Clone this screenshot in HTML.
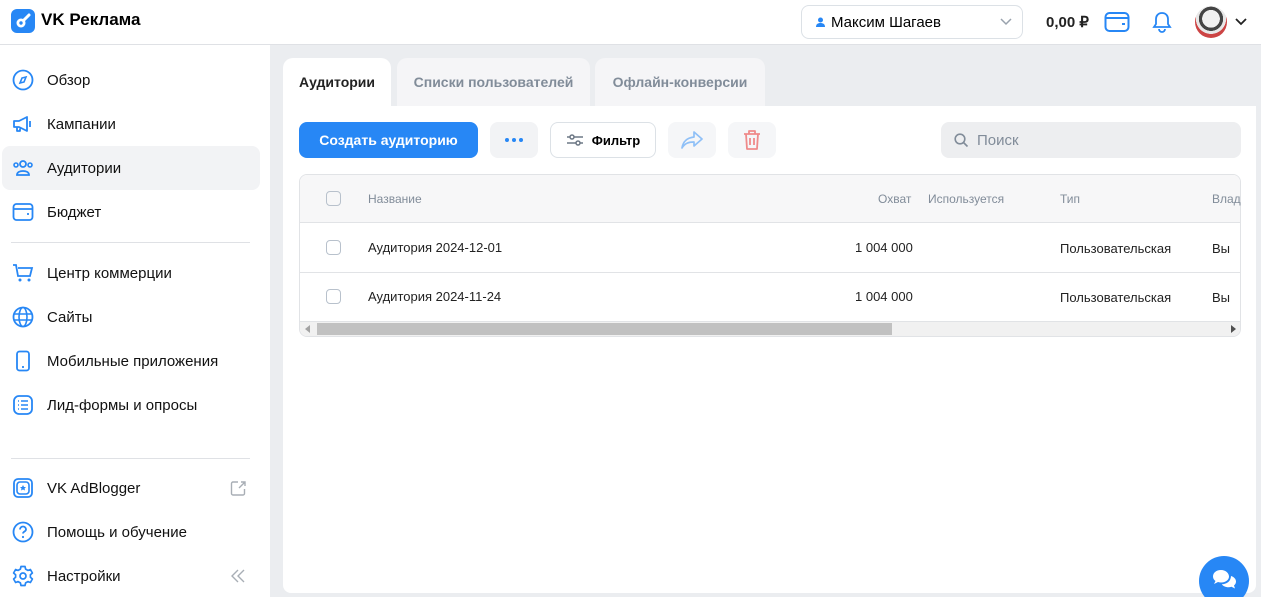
<!DOCTYPE html>
<html style="overflow:hidden"><head><meta charset="utf-8"><style>
*{box-sizing:border-box;margin:0;padding:0}
html,body{width:1261px;height:597px;overflow:hidden}
body{font-family:"Liberation Sans",sans-serif;background:#fff;color:#000;position:relative}
.top{position:absolute;left:0;top:0;width:1261px;height:45px;border-bottom:1px solid #dfe1e5;background:#fff}
.side{position:absolute;left:0;top:45px;width:270px;height:552px;background:#fff}
.main{position:absolute;left:270px;top:45px;width:991px;height:552px;background:#ebedf0}
.nav{position:absolute;left:0;width:260px;height:44px;display:flex;align-items:center;font-size:15px;color:#111}
.nav svg{position:absolute;left:12px}
.nav span{position:absolute;left:47px}
.sep{position:absolute;left:11px;width:239px;height:1px;background:#dfe1e5}
.tab{position:absolute;top:58px;height:48px;border-radius:10px 10px 0 0;font-size:14px;font-weight:bold;display:flex;align-items:center;justify-content:center;color:#818c99;background:#f5f5f7}
.card{position:absolute;left:283px;top:106px;width:973px;height:487px;background:#fff;border-radius:0 0 8px 8px}
.btn{position:absolute;top:122px;height:36px;border-radius:8px;display:flex;align-items:center;justify-content:center;font-size:14px}
.t{position:absolute;font-size:13px;color:#222}
.cb{position:absolute;left:326px;width:15px;height:15px;border:1.5px solid #b8c1cc;border-radius:4px}
</style></head><body>
<div class="top">
 <svg style="position:absolute;left:11px;top:9px" width="24" height="24" viewBox="0 0 24 24"><rect width="24" height="24" rx="6" fill="#2787f5"/><circle cx="10" cy="14" r="4.5" fill="#fff"/><path d="M12 12l6-6" stroke="#fff" stroke-width="3" stroke-linecap="round"/><circle cx="10" cy="14" r="1.7" fill="#2787f5"/></svg>
 <div style="position:absolute;left:41px;top:10px;font-size:17px;font-weight:bold">VK Реклама</div>
 <div style="position:absolute;left:801px;top:5px;width:222px;height:34px;border:1px solid #dce1e6;border-radius:8px">
  <svg style="position:absolute;left:14px;top:11px" width="9" height="10" viewBox="0 0 9 10"><circle cx="4.5" cy="3" r="2.5" fill="#2787f5"/><path d="M0 10c0-3 2-4 4.5-4s4.5 1 4.5 4z" fill="#2787f5"/></svg>
  <div style="position:absolute;left:29px;top:8px;font-size:15px">Максим Шагаев</div>
  <svg style="position:absolute;left:198px;top:12px" width="12" height="8"><path d="M1 1l5 5 5-5" stroke="#99a2ad" stroke-width="1.5" fill="none"/></svg>
 </div>
 <div style="position:absolute;left:1046px;top:13px;font-size:15px;font-weight:bold;color:#222">0,00 ₽</div>
 <svg style="position:absolute;left:1104px;top:11px" width="26" height="22" viewBox="0 0 26 22"><rect x="1.5" y="2" width="23" height="18" rx="4" fill="none" stroke="#2787f5" stroke-width="2"/><path d="M1.5 7h23" stroke="#2787f5" stroke-width="2"/><path d="M18 13h3" stroke="#2787f5" stroke-width="2"/></svg>
 <svg style="position:absolute;left:1152px;top:11px" width="20" height="22" viewBox="0 0 20 22"><path d="M10 2c-4 0-6 3-6 6v5l-2 3h16l-2-3V8c0-3-2-6-6-6zM7 18a3 3 0 006 0" fill="none" stroke="#2787f5" stroke-width="1.8"/></svg>
 <div style="position:absolute;left:1195px;top:6px;width:32px;height:32px;border-radius:50%;background:radial-gradient(circle at 50% 40%,#f0f0f0 0 35%,#444 36% 48%,#e8e8e8 49% 60%,#c44 61%)"></div>
 <svg style="position:absolute;left:1235px;top:18px" width="12" height="8"><path d="M1 1l5 5 5-5" stroke="#222" stroke-width="1.8" fill="none"/></svg>
</div>
<div class="side">
 <div class="nav" style="top:13px"><svg width="22" height="22" viewBox="0 0 22 22"><circle cx="11" cy="11" r="9.5" fill="none" stroke="#2787f5" stroke-width="1.8"/><path d="M14 8l-2 5-4 1 2-5z" fill="none" stroke="#2787f5" stroke-width="1.6"/></svg><span>Обзор</span></div>
 <div class="nav" style="top:57px"><svg width="22" height="22" viewBox="0 0 22 22"><path d="M2 8h5l8-4v14l-8-4H2zM5 14v4h3v-4M18 8v6" fill="none" stroke="#2787f5" stroke-width="1.8" stroke-linejoin="round"/></svg><span>Кампании</span></div>
 <div class="nav" style="top:101px;background:#f2f3f5;border-radius:8px;left:2px;width:258px"><svg style="left:10px" width="22" height="22" viewBox="0 0 22 22"><circle cx="11" cy="7" r="3" fill="none" stroke="#2787f5" stroke-width="1.8"/><path d="M5 18c0-3 3-4 6-4s6 1 6 4z" fill="none" stroke="#2787f5" stroke-width="1.8"/><circle cx="4" cy="8" r="2" fill="none" stroke="#2787f5" stroke-width="1.6"/><circle cx="18" cy="8" r="2" fill="none" stroke="#2787f5" stroke-width="1.6"/></svg><span style="left:45px">Аудитории</span></div>
 <div class="nav" style="top:145px"><svg width="22" height="22" viewBox="0 0 22 22"><rect x="1.5" y="3" width="19" height="16" rx="3" fill="none" stroke="#2787f5" stroke-width="1.8"/><path d="M1.5 8h19M15 13h2" stroke="#2787f5" stroke-width="1.8"/></svg><span>Бюджет</span></div>
 <div class="sep" style="top:197px"></div>
 <div class="nav" style="top:206px"><svg width="22" height="22" viewBox="0 0 22 22"><path d="M1 3h3l2 11h12l2-8H6" fill="none" stroke="#2787f5" stroke-width="1.8"/><circle cx="8" cy="18" r="1.5" fill="#2787f5"/><circle cx="17" cy="18" r="1.5" fill="#2787f5"/></svg><span>Центр коммерции</span></div>
 <div class="nav" style="top:250px"><svg width="22" height="22" viewBox="0 0 22 22"><circle cx="11" cy="11" r="9.5" fill="none" stroke="#2787f5" stroke-width="1.8"/><ellipse cx="11" cy="11" rx="4" ry="9.5" fill="none" stroke="#2787f5" stroke-width="1.6"/><path d="M2 8h18M2 14h18" stroke="#2787f5" stroke-width="1.6"/></svg><span>Сайты</span></div>
 <div class="nav" style="top:294px"><svg width="22" height="22" viewBox="0 0 22 22"><rect x="5" y="1.5" width="12" height="19" rx="2.5" fill="none" stroke="#2787f5" stroke-width="1.8"/><path d="M10 17h2" stroke="#2787f5" stroke-width="1.8"/></svg><span>Мобильные приложения</span></div>
 <div class="nav" style="top:338px"><svg width="22" height="22" viewBox="0 0 22 22"><rect x="2" y="2" width="18" height="18" rx="5" fill="none" stroke="#2787f5" stroke-width="1.8"/><path d="M6 7h1M9 7h7M6 11h1M9 11h7M6 15h1M9 15h7" stroke="#2787f5" stroke-width="1.6"/></svg><span>Лид-формы и опросы</span></div>
 <div class="sep" style="top:413px"></div>
 <div class="nav" style="top:421px"><svg width="22" height="22" viewBox="0 0 22 22"><rect x="2" y="2" width="18" height="18" rx="4" fill="none" stroke="#2787f5" stroke-width="1.8"/><rect x="5" y="5" width="12" height="12" rx="3" fill="none" stroke="#2787f5" stroke-width="1.6"/><path d="M11 8l1 2h2l-1.5 1.5.5 2-2-1-2 1 .5-2L8 10h2z" fill="#2787f5"/></svg><span>VK AdBlogger</span><svg style="left:230px" width="17" height="17" viewBox="0 0 17 17"><path d="M8 2H3a1.5 1.5 0 00-1.5 1.5v10A1.5 1.5 0 003 15h10a1.5 1.5 0 001.5-1.5V9M11 2h4v4M15 2L9 8" fill="none" stroke="#a8aeb5" stroke-width="1.4"/></svg></div>
 <div class="nav" style="top:465px"><svg width="22" height="22" viewBox="0 0 22 22"><circle cx="11" cy="11" r="9.5" fill="none" stroke="#2787f5" stroke-width="1.8"/><path d="M8 8.5a3 3 0 116 0c0 2-3 2-3 4" fill="none" stroke="#2787f5" stroke-width="1.8"/><circle cx="11" cy="16" r="1.1" fill="#2787f5"/></svg><span>Помощь и обучение</span></div>
 <div class="nav" style="top:509px"><svg width="22" height="22" viewBox="0 0 22 22"><path d="M9 1.5h4l.6 2.6 2.3 1.3 2.5-.9 2 3.5-2 1.8v2.4l2 1.8-2 3.5-2.5-.9-2.300 1.3-.6 2.6H9l-.6-2.6-2.3-1.3-2.5.9-2-3.5 2-1.8V9.8l-2-1.8 2-3.5 2.5.9 2.3-1.3z" fill="none" stroke="#2787f5" stroke-width="1.7" stroke-linejoin="round"/><circle cx="11" cy="11" r="3" fill="none" stroke="#2787f5" stroke-width="1.7"/></svg><span>Настройки</span><svg style="left:230px" width="16" height="14" viewBox="0 0 16 14"><path d="M8 1L2 7l6 6M14 1L8 7l6 6" fill="none" stroke="#a8aeb5" stroke-width="1.4"/></svg></div>
</div>
<div class="main"></div>
<div class="tab" style="left:283px;width:108px;background:#fff;color:#222">Аудитории</div>
<div class="tab" style="left:397px;width:193px">Списки пользователей</div>
<div class="tab" style="left:595px;width:170px">Офлайн-конверсии</div>
<div class="card"></div>
<div class="btn" style="left:299px;width:179px;background:#2787f5;color:#fff;font-weight:bold">Создать аудиторию</div>
<div class="btn" style="left:490px;width:48px;background:#f2f3f5"><svg width="18" height="4"><circle cx="2" cy="2" r="2" fill="#2787f5"/><circle cx="9" cy="2" r="2" fill="#2787f5"/><circle cx="16" cy="2" r="2" fill="#2787f5"/></svg></div>
<div class="btn" style="left:550px;width:106px;border:1px solid #dce1e6;font-weight:bold;font-size:13px"><svg style="margin-right:8px" width="18" height="14" viewBox="0 0 18 14"><path d="M1 4h16M1 10h16" stroke="#6d7885" stroke-width="1.5"/><circle cx="6" cy="4" r="2" fill="#fff" stroke="#6d7885" stroke-width="1.5"/><circle cx="12" cy="10" r="2" fill="#fff" stroke="#6d7885" stroke-width="1.5"/></svg>Фильтр</div>
<div class="btn" style="left:668px;width:48px;background:#f5f6f8"><svg width="22" height="18" viewBox="0 0 22 18"><path d="M13 1l8 7-8 7v-4c-5 0-9 1-12 6 1-6 4-10 12-11z" fill="none" stroke="#8fc0f7" stroke-width="1.7" stroke-linejoin="round"/></svg></div>
<div class="btn" style="left:728px;width:48px;background:#f5f6f8"><svg width="20" height="22" viewBox="0 0 20 22"><path d="M2 5h16M7 5V2h6v3M4 5l1 15h10l1-15M8 9v7M12 9v7" fill="none" stroke="#ef8a8a" stroke-width="1.8" stroke-linejoin="round"/></svg></div>
<div style="position:absolute;left:941px;top:122px;width:300px;height:36px;background:#edeef0;border-radius:8px"><svg style="position:absolute;left:13px;top:11px" width="15" height="15" viewBox="0 0 15 15"><circle cx="6" cy="6" r="4.8" fill="none" stroke="#818c99" stroke-width="1.6"/><path d="M9.5 9.5l4 4" stroke="#818c99" stroke-width="1.6"/></svg><div style="position:absolute;left:36px;top:10px;font-size:15px;color:#818c99">Поиск</div></div>
<div style="position:absolute;left:299px;top:174px;width:942px;height:163px;border:1px solid #e1e3e6;border-radius:8px;overflow:hidden">
 <div style="position:absolute;left:0;top:0;width:100%;height:48px;background:#f7f7f8;border-bottom:1px solid #e1e3e6"></div>
 <div style="position:absolute;left:0;top:97px;width:100%;height:1px;background:#e1e3e6"></div>
 <div style="position:absolute;left:0;top:146px;width:100%;height:16px;background:#f1f1f1;border-top:1px solid #e1e3e6"></div>
 <div style="position:absolute;left:17px;top:148px;width:575px;height:12px;background:#c1c1c1"></div>
 <svg style="position:absolute;left:5px;top:150px" width="5" height="8"><path d="M5 0v8L0 4z" fill="#a3a3a3"/></svg>
 <svg style="position:absolute;left:931px;top:150px" width="5" height="8"><path d="M0 0v8l5-4z" fill="#505050"/></svg>
</div>
<div class="cb" style="top:191px"></div>
<div class="cb" style="top:240px"></div>
<div class="cb" style="top:289px"></div>
<div class="t" style="left:368px;top:192px;color:#818c99;font-size:12px">Название</div>
<div class="t" style="left:878px;top:192px;color:#818c99;font-size:12px">Охват</div>
<div class="t" style="left:928px;top:192px;color:#818c99;font-size:12px">Используется</div>
<div class="t" style="left:1060px;top:192px;color:#818c99;font-size:12px">Тип</div>
<div class="t" style="left:1212px;top:192px;color:#818c99;font-size:12px">Влад</div>
<div class="t" style="left:368px;top:240px">Аудитория 2024-12-01</div>
<div class="t" style="left:855px;top:240px">1 004 000</div>
<div class="t" style="left:1060px;top:241px">Пользовательская</div>
<div class="t" style="left:1212px;top:241px">Вы</div>
<div class="t" style="left:368px;top:289px">Аудитория 2024-11-24</div>
<div class="t" style="left:855px;top:289px">1 004 000</div>
<div class="t" style="left:1060px;top:290px">Пользовательская</div>
<div class="t" style="left:1212px;top:290px">Вы</div>
<div style="position:absolute;left:1199px;top:556px;width:50px;height:50px;border-radius:50%;background:#2787f5"><svg style="position:absolute;left:13px;top:13px" width="25" height="22" viewBox="0 0 25 22"><path d="M9 1C4 1 1 4 1 7.5c0 2 1 3.5 2.5 4.5L2 15l4-2c1 .3 2 .5 3 .5 5 0 8-3 8-6S14 1 9 1z" fill="#fff"/><path d="M19 7c3 1 5 3 5 5.5 0 1.5-.7 3-2 4l1 3-3.5-1.7c-1 .3-2 .4-3 .4-3 0-5.5-1.2-6.7-3 5 0 9-2.8 9.2-8.2z" fill="#fff"/></svg></div>
</body></html>
